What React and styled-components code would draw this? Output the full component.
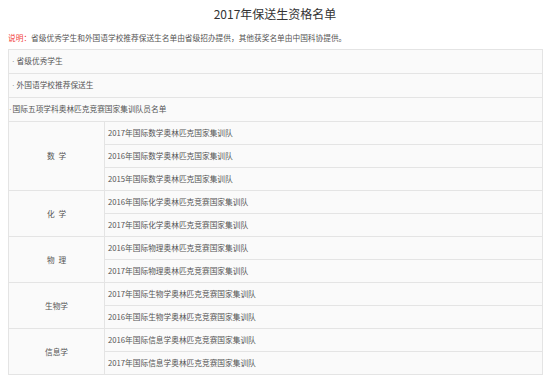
import React from 'react';
import styled, { createGlobalStyle } from 'styled-components';

const GlobalStyle = createGlobalStyle`
  html, body {
    margin: 0;
    padding: 0;
    background: #fff;
  }
  body {
    font-family: "Noto Sans CJK SC", "Noto Sans", sans-serif;
  }
`;

const Page = styled.div`
  width: 550px;
  padding: 0 8px;
  box-sizing: border-box;
`;

const Title = styled.h1`
  margin: 0;
  height: 27px;
  line-height: 27px;
  font-size: 12px;
  font-weight: normal;
  color: #333;
  text-align: center;
`;

const Note = styled.p`
  margin: 0;
  height: 22px;
  line-height: 22px;
  font-size: 7.7px;
  color: #555;
  white-space: nowrap;
`;

const Red = styled.span`
  color: #f2403a;
`;

const Dot = styled.span`
  font-family: "Liberation Sans", sans-serif;
  color: #777;
  margin-right: ${(p) => (p.$gap ? p.$gap : 0)}px;
`;

const Table = styled.table`
  width: 535px;
  border-collapse: collapse;
  font-size: 7.7px;
  color: #555;
`;

const Cell = styled.td`
  height: 22px;
  padding: 0 0 0 ${(p) => (p.$pad !== undefined ? p.$pad : 3)}px;
  border: 1px solid #e4e4e4;
  background: #fafafa;
  vertical-align: middle;
  white-space: nowrap;
  line-height: 22px;
  box-sizing: border-box;
`;

const Subject = styled(Cell)`
  width: 96px;
  padding: 0;
  text-align: center;
`;

const groups = [
  { name: '数\u2002学', items: ['2017年国际数学奥林匹克国家集训队', '2016年国际数学奥林匹克国家集训队', '2015年国际数学奥林匹克国家集训队'] },
  { name: '化\u2002学', items: ['2016年国际化学奥林匹克竞赛国家集训队', '2017年国际化学奥林匹克竞赛国家集训队'] },
  { name: '物\u2002理', items: ['2016年国际物理奥林匹克竞赛国家集训队', '2017年国际物理奥林匹克竞赛国家集训队'] },
  { name: '生物学', items: ['2017年国际生物学奥林匹克竞赛国家集训队', '2016年国际生物学奥林匹克竞赛国家集训队'] },
  { name: '信息学', items: ['2016年国际信息学奥林匹克竞赛国家集训队', '2017年国际信息学奥林匹克竞赛国家集训队'] },
];

export default function App() {
  return (
    <Page>
      <GlobalStyle />
      <Title>2017年保送生资格名单</Title>
      <Note>
        <Red>说明：</Red>省级优秀学生和外国语学校推荐保送生名单由省级招办提供，其他获奖名单由中国科协提供。
      </Note>
      <Table>
        <tbody>
          <tr>
            <Cell colSpan={2} $pad={3}><Dot $gap={2}>·</Dot>省级优秀学生</Cell>
          </tr>
          <tr>
            <Cell colSpan={2} $pad={3}><Dot $gap={2}>·</Dot>外国语学校推荐保送生</Cell>
          </tr>
          <tr>
            <Cell colSpan={2} $pad={0}><Dot $gap={1}>·</Dot>国际五项学科奥林匹克竞赛国家集训队员名单</Cell>
          </tr>
          {groups.map((g) =>
            g.items.map((item, i) => (
              <tr key={item}>
                {i === 0 && <Subject rowSpan={g.items.length}>{g.name}</Subject>}
                <Cell>{item}</Cell>
              </tr>
            ))
          )}
        </tbody>
      </Table>
    </Page>
  );
}
